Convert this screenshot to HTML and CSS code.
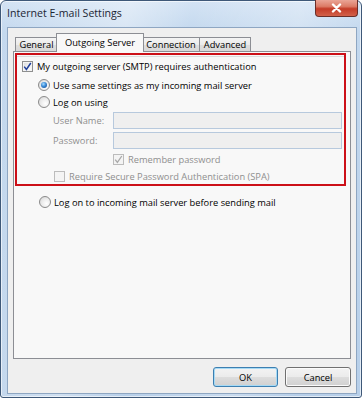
FILE: index.html
```html
<!DOCTYPE html>
<html>
<head>
<meta charset="utf-8">
<link rel="stylesheet" href="styles.css">
</head>
<body>
<div class="window">
  <div class="titlebar">
    <div class="title">Internet E-mail Settings</div>
    <div class="close">
      <svg width="13" height="10" viewBox="0 0 13 10"><path d="M3 1.5 L10 8.5 M10 1.5 L3 8.5" stroke="#ffffff" stroke-width="2.4" stroke-linecap="round"/></svg>
    </div>
  </div>
  <div class="client">
    <div class="tabs">
      <div class="tab t-general">General</div>
      <div class="tab selected">Outgoing Server</div>
      <div class="tab t-conn">Connection</div>
      <div class="tab t-adv">Advanced</div>
    </div>
    <div class="panel">
      <div class="highlight">
        <div class="row r1">
          <span class="cb"><svg width="9" height="9" viewBox="0 0 9 9"><path d="M1.2 4.6 L3.4 7.4 L7.8 1" fill="none" stroke="#1f3f9a" stroke-width="1.5"/></svg></span>
          <span class="lbl">My outgoing server (SMTP) requires authentication</span>
        </div>
        <div class="row r2 ind1">
          <span class="rb on"><span class="dot"></span></span>
          <span class="lbl">Use same settings as my incoming mail server</span>
        </div>
        <div class="row r3 ind1">
          <span class="rb"></span>
          <span class="lbl">Log on using</span>
        </div>
        <div class="row r4 ind2">
          <span class="flabel dis">User Name:</span>
          <span class="input"></span>
        </div>
        <div class="row r5 ind2">
          <span class="flabel dis">Password:</span>
          <span class="input"></span>
        </div>
        <div class="row r6 ind3">
          <span class="cb dis"><svg width="9" height="9" viewBox="0 0 9 9"><path d="M1.2 4.6 L3.4 7.4 L7.8 1" fill="none" stroke="#a9a9a9" stroke-width="1.3"/></svg></span>
          <span class="lbl dis">Remember password</span>
        </div>
        <div class="row r7 ind2b">
          <span class="cb dis"></span>
          <span class="lbl dis">Require Secure Password Authentication (SPA)</span>
        </div>
      </div>
      <div class="row r8 ind1b">
        <span class="rb"></span>
        <span class="lbl">Log on to incoming mail server before sending mail</span>
      </div>
    </div>
    <div class="buttons">
      <div class="btn btn-ok">OK</div>
      <div class="btn btn-cancel">Cancel</div>
    </div>
  </div>
</div>
</body>
</html>
```
FILE: styles.css
```css
html, body {
  margin: 0;
  padding: 0;
  background: #ffffff;
}
body {
  font-family: "Open Sans", "Noto Sans", sans-serif;
  font-size: 9.3px;
  color: #000000;
}
.window {
  width: 360px;
  height: 396px;
  border: 1px solid #3e5878;
  border-radius: 6px 6px 3px 3px;
  background:
    linear-gradient(100deg, rgba(255,255,255,0) 0%, rgba(255,255,255,0.35) 30%, rgba(255,255,255,0) 45%, rgba(255,255,255,0.25) 70%, rgba(255,255,255,0) 85%),
    linear-gradient(180deg, #d3e3f4 0%, #c3d8ee 8%, #b7cfe9 100%);
  box-shadow: inset 0 0 0 1px rgba(255,255,255,0.6);
  display: flex;
  flex-direction: column;
}
.titlebar {
  height: 26px;
  display: flex;
  justify-content: space-between;
  align-items: flex-start;
  padding: 0 3px 0 6px;
}
.title {
  font-size: 10.6px;
  margin-top: 5px;
  color: #1b2533;
}
.close {
  width: 41px;
  height: 16px;
  margin-top: -1px;
  border: 1px solid #6a2e28;
  border-top: none;
  border-radius: 0 0 4px 4px;
  background: linear-gradient(180deg, #eaa596 0%, #dc7b66 40%, #c43c28 55%, #d2614a 100%);
  display: flex;
  align-items: center;
  justify-content: center;
}
.client {
  flex: 1;
  margin: 0 4px 3px 6px;
  border: 1px solid #8ea6c2;
  background: #efefef;
  padding: 5px 5px 0 5px;
  display: flex;
  flex-direction: column;
}
.tabs {
  display: flex;
  align-items: flex-end;
  height: 18px;
  padding-left: 2px;
  position: relative;
  z-index: 1;
}
.tab {
  height: 14px;
  line-height: 13px;
  text-align: center;
  border: 1px solid #8c8e94;
  border-bottom: none;
  background: linear-gradient(180deg, #f4f4f4 0%, #ebebeb 50%, #dedede 51%, #d9d9d9 100%);
  box-sizing: border-box;
  white-space: nowrap;
}
.t-general { width: 43px; }
.tab.selected {
  width: 88px;
  height: 19px;
  line-height: 17px;
  margin: 0 -2px -1px -2px;
  background: #f8f8f8;
  position: relative;
  z-index: 2;
}
.t-conn { width: 58px; }
.t-adv { width: 52px; margin-left: -1px; }
.panel {
  height: 308px;
  border: 1px solid #8c8e94;
  background: #f8f8f8;
  padding: 1px 4px 0 1px;
  box-sizing: border-box;
}
.highlight {
  border: 2px solid #cc1018;
  height: 133px;
  box-sizing: border-box;
  padding: 4px 0 0 5px;
  background: linear-gradient(180deg, #f8f8f8 0px, #f8f8f8 1px, #dcdcdc 1px, #dcdcdc 2px, #f8f8f8 2px);
}
.row {
  display: flex;
  align-items: center;
}
.r1 { height: 15px; }
.r2 { height: 16px; margin-top: 3px; }
.r3 { height: 16px; margin-top: 1px; }
.r4 { height: 18px; margin-top: 1px; }
.r5 { height: 18px; margin-top: 2px; }
.r6 { height: 17px; margin-top: 2px; }
.r7 { height: 16px; }
.r8 { height: 16px; margin-top: 8px; }
.ind1 { padding-left: 16px; }
.ind1b { padding-left: 24px; }
.ind2 { padding-left: 31px; }
.ind2b { padding-left: 32px; }
.ind3 { padding-left: 91px; }
.lbl {
  margin-left: 4px;
  white-space: nowrap;
}
.rb + .lbl { margin-left: 3px; }
.dis { color: #8f8f8f; }
.cb {
  width: 9px;
  height: 9px;
  border: 1px solid #8e8f8f;
  background: linear-gradient(135deg, #d9d9d9 0%, #f1f1f1 55%, #ffffff 100%);
  box-shadow: inset 0 0 0 1px #f4f4f4;
  display: flex;
  align-items: center;
  justify-content: center;
  flex: none;
}
.cb.dis {
  border-color: #bcbcbc;
  background: #f4f4f4;
  box-shadow: none;
}
.rb {
  width: 10px;
  height: 10px;
  border: 1px solid #8a8a8a;
  border-radius: 50%;
  background: radial-gradient(circle at 65% 65%, #ffffff 0%, #e9e9e9 55%, #cfcfcf 100%);
  display: flex;
  align-items: center;
  justify-content: center;
  flex: none;
}
.rb.on .dot {
  width: 6px;
  height: 6px;
  border-radius: 50%;
  background: radial-gradient(circle at 40% 35%, #a6dcff 0%, #3a8ad6 45%, #0c3d86 100%);
}
.flabel {
  width: 60px;
  white-space: nowrap;
}
.input {
  width: 227px;
  height: 15px;
  border: 1px solid #b7c9dd;
  background: #efefef;
  flex: none;
}
.buttons {
  display: flex;
  justify-content: flex-end;
  gap: 7px;
  padding: 8px 0 0 0;
}
.btn {
  height: 18px;
  border: 1px solid #707070;
  border-radius: 3px;
  background: linear-gradient(180deg, #f3f3f3 0%, #ebebeb 50%, #dddddd 51%, #d0d0d0 100%);
  box-shadow: inset 0 0 0 1px #fbfbfb;
  display: flex;
  align-items: center;
  justify-content: center;
}
.btn-ok {
  width: 63px;
  border-color: #3c7fb1;
  box-shadow: inset 0 0 0 1px #a6daf5;
}
.btn-cancel {
  width: 64px;
}
```
